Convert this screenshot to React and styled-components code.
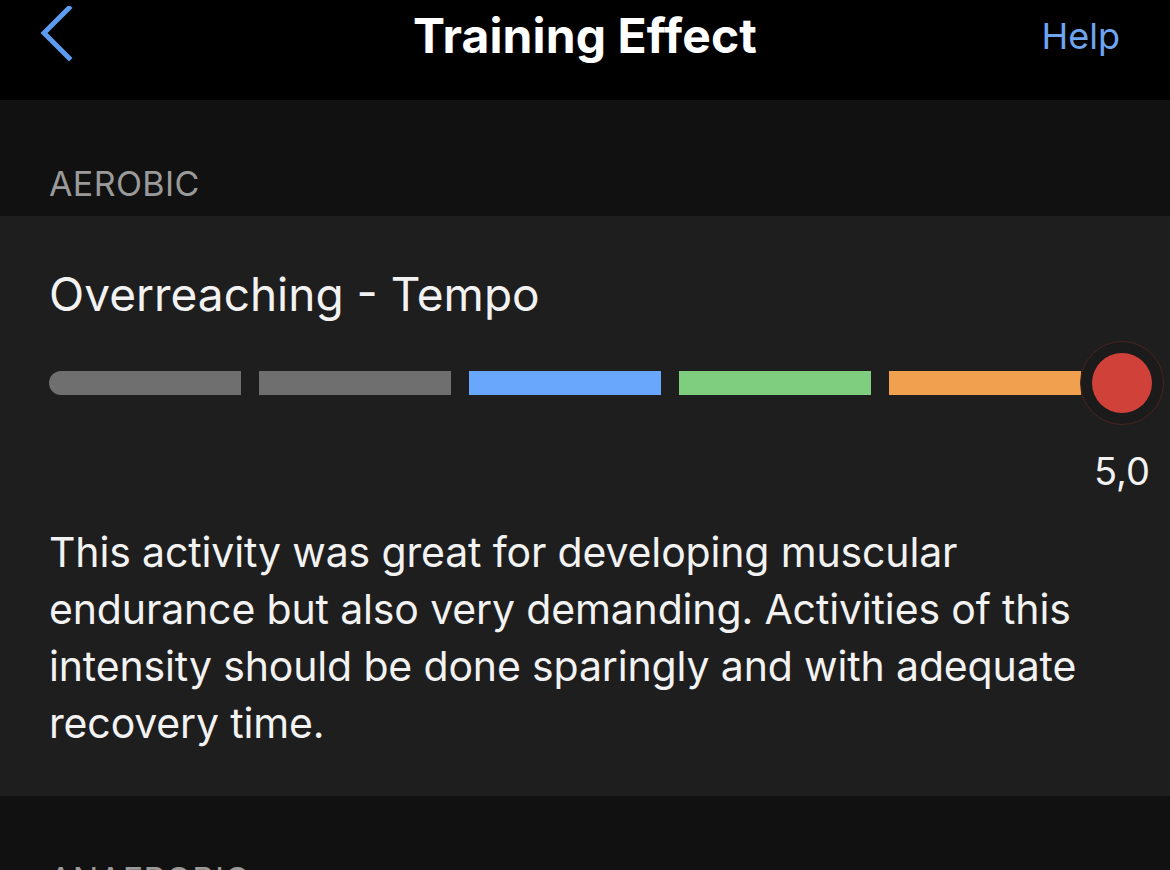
import React from "react";
import styled, { createGlobalStyle } from "styled-components";

const GlobalStyle = createGlobalStyle`
  html, body {
    margin: 0;
    padding: 0;
    background: #111111;
  }
  body {
    font-family: Inter, "Noto Sans", "Liberation Sans", sans-serif;
    -webkit-font-smoothing: antialiased;
  }
`;

const Screen = styled.div`
  width: 1170px;
  height: 870px;
  overflow: hidden;
  background: #111111;
`;

const NavBar = styled.header`
  height: 100px;
  background: #000;
  display: grid;
  grid-template-columns: 200px 1fr 200px;
  align-items: start;
`;

const BackButton = styled.button`
  background: none;
  border: 0;
  padding: 6px 0 0 40px;
  justify-self: start;
  cursor: pointer;
  display: flex;
`;

const Title = styled.h1`
  margin: 0;
  padding-top: 8px;
  text-align: center;
  color: #fff;
  font-size: 48px;
  font-weight: 700;
  letter-spacing: 0.1px;
  line-height: 56px;
`;

const NavAction = styled.a`
  justify-self: end;
  padding: 14px 50px 0 0;
  color: #6ea4f0;
  font-size: 36px;
  line-height: 44px;
  text-decoration: none;
`;

const SectionLabel = styled.div`
  height: 116px;
  box-sizing: border-box;
  padding: 64px 0 0 49px;
  color: #9a9a9a;
  font-size: 34px;
  line-height: 40px;
  letter-spacing: 0.4px;
`;

const Card = styled.section`
  background: #1e1e1e;
  height: 580px;
  box-sizing: border-box;
  padding: 50px 6px 0 49px;
`;

const EffectName = styled.h2`
  margin: 0;
  color: #f2f2f2;
  font-size: 46px;
  font-weight: 400;
  line-height: 56px;
`;

const Scale = styled.div`
  display: flex;
  align-items: center;
  margin-top: 19px;
  height: 84px;
`;

const Segments = styled.div`
  flex: 1;
  display: flex;
  gap: 18px;
  margin-right: -1px;
`;

const Segment = styled.div`
  flex: 1;
  height: 24px;
  background: ${(p) => p.color};
  border-radius: ${(p) => (p.first ? "12px 0 0 12px" : "0")};
`;

const Knob = styled.div`
  width: 84px;
  height: 84px;
  box-sizing: border-box;
  border-radius: 50%;
  background: #1b1b1b;
  border: 1px solid #4a2320;
  display: flex;
  align-items: center;
  justify-content: center;
`;

const KnobDot = styled.div`
  width: 60px;
  height: 60px;
  border-radius: 50%;
  background: #d0413a;
`;

const Value = styled.div`
  text-align: right;
  padding-right: 14px;
  margin-top: 22px;
  color: #f2f2f2;
  font-size: 38px;
  line-height: 48px;
`;

const Description = styled.p`
  margin: 29px 0 0;
  max-width: 1060px;
  color: #f2f2f2;
  font-size: 41px;
  line-height: 57px;
  letter-spacing: -0.15px;
`;

const segmentColors = ["#6f6f6f", "#6f6f6f", "#68a7fb", "#7fcd7e", "#f0a04f"];

const Chevron = () => (
  <svg width="34" height="56" viewBox="0 0 34 56">
    <polyline
      points="29,2 4,27 29,52"
      fill="none"
      stroke="#5c9bef"
      strokeWidth="5"
      strokeLinecap="square"
      strokeLinejoin="miter"
    />
  </svg>
);

export default function App() {
  return (
    <Screen>
      <GlobalStyle />
      <NavBar>
        <BackButton aria-label="Back">
          <Chevron />
        </BackButton>
        <Title>Training Effect</Title>
        <NavAction href="#">Help</NavAction>
      </NavBar>

      <SectionLabel>AEROBIC</SectionLabel>
      <Card>
        <EffectName>Overreaching - Tempo</EffectName>
        <Scale>
          <Segments>
            {segmentColors.map((c, i) => (
              <Segment key={i} color={c} first={i === 0} />
            ))}
          </Segments>
          <Knob>
            <KnobDot />
          </Knob>
        </Scale>
        <Value>5,0</Value>
        <Description>
          This activity was great for developing muscular endurance but also
          very demanding. Activities of this intensity should be done sparingly
          and with adequate recovery time.
        </Description>
      </Card>

      <SectionLabel>ANAEROBIC</SectionLabel>
    </Screen>
  );
}
